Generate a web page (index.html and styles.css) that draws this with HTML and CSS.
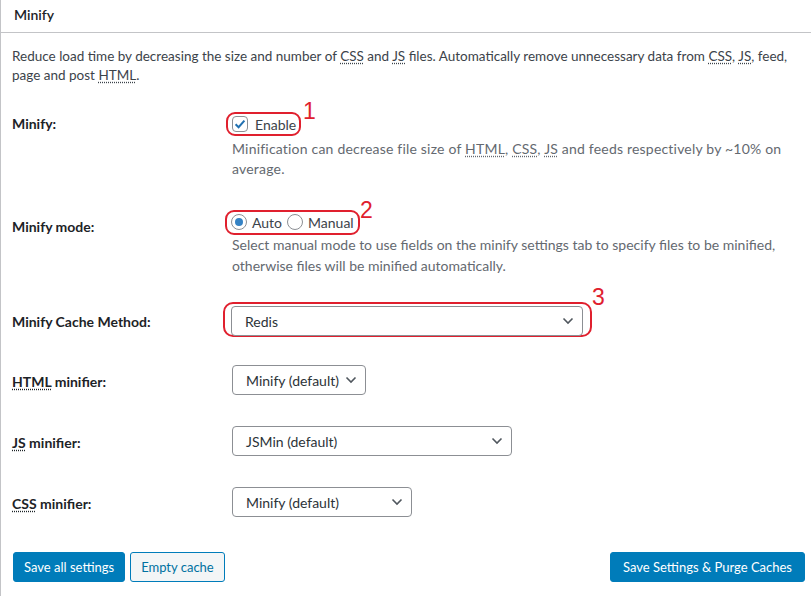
FILE: index.html
```html
<!DOCTYPE html>
<html>
<head>
<meta charset="utf-8">
<link rel="stylesheet" href="styles.css">
</head>
<body>
<div class="box">
  <h3 class="box-title">Minify</h3>
  <div class="inside">
    <p class="intro">Reduce load time by decreasing the size and number of <abbr>CSS</abbr> and <abbr>JS</abbr> files. Automatically remove unnecessary data from <abbr>CSS</abbr>, <abbr>JS</abbr>, feed, page and post <abbr>HTML</abbr>.</p>

    <div class="row row-1">
      <div class="label">Minify:</div>
      <div class="field">
        <div class="line">
          <span class="mark mark-1">
            <span class="checkbox"><svg viewBox="0 0 16 16" width="16" height="16"><path d="M3.6 8.2 L6.6 11.2 L12.4 4.6" fill="none" stroke="#2271b1" stroke-width="2"/></svg></span>
            <span class="opt">Enable</span>
            <span class="num num-1">1</span>
          </span>
        </div>
        <p class="desc">Minification can decrease file size of <abbr>HTML</abbr>, <abbr>CSS</abbr>, <abbr>JS</abbr> and feeds respectively by ~10% on average.</p>
      </div>
    </div>

    <div class="row row-2">
      <div class="label">Minify mode:</div>
      <div class="field">
        <div class="line">
          <span class="mark mark-2">
            <span class="radio checked"></span><span class="opt">Auto</span>
            <span class="radio"></span><span class="opt">Manual</span>
            <span class="num num-2">2</span>
          </span>
        </div>
        <p class="desc">Select manual mode to use fields on the minify settings tab to specify files to be minified, otherwise files will be minified automatically.</p>
      </div>
    </div>

    <div class="row row-3">
      <div class="label">Minify Cache Method:</div>
      <div class="field">
        <span class="mark mark-3">
          <span class="select sel-redis">Redis</span>
          <span class="num num-3">3</span>
        </span>
      </div>
    </div>

    <div class="row row-4">
      <div class="label"><abbr>HTML</abbr> minifier:</div>
      <div class="field"><span class="select sel-html">Minify (default)</span></div>
    </div>

    <div class="row row-5">
      <div class="label"><abbr>JS</abbr> minifier:</div>
      <div class="field"><span class="select sel-js">JSMin (default)</span></div>
    </div>

    <div class="row row-6">
      <div class="label"><abbr>CSS</abbr> minifier:</div>
      <div class="field"><span class="select sel-css">Minify (default)</span></div>
    </div>

    <div class="buttons">
      <span class="btn primary">Save all settings</span>
      <span class="btn secondary">Empty cache</span>
      <span class="spacer"></span>
      <span class="btn primary wide">Save Settings &amp; Purge Caches</span>
    </div>
  </div>
</div>
</body>
</html>
```
FILE: styles.css
```css
html, body {
  margin: 0;
  padding: 0;
  background: #fff;
}
body {
  font-family: "Segoe UI", Lato, "Liberation Sans", sans-serif;
  color: #3c434a;
  font-size: 13px;
  width: 811px;
  height: 596px;
  overflow: hidden;
}
.box {
  border-left: 1px solid #c3c4c7;
  min-height: 596px;
  box-sizing: border-box;
}
.box-title {
  margin: 0;
  height: 33px;
  box-sizing: border-box;
  border-bottom: 1px solid #c3c4c7;
  padding: 5px 0 0 13px;
  font-size: 14px;
  font-weight: 600;
  line-height: 19px;
  color: #1d2327;
}
.inside {
  padding: 0 6px 0 11px;
}
abbr {
  text-decoration: underline dotted;
  text-underline-offset: 2px;
}
.intro {
  margin: 14px 0 0;
  line-height: 19px;
  font-size: 13.5px;
}
.row {
  display: flex;
  align-items: flex-start;
}
.label {
  width: 220px;
  flex: none;
  font-size: 14px;
  font-weight: 700;
  color: #1d2327;
  line-height: 24px;
}
.field {
  flex: 1;
  font-size: 14px;
}
.line {
  height: 24px;
  display: flex;
  align-items: center;
}
.desc {
  margin: 3px 0 0;
  line-height: 20px;
  color: #646970;
  font-size: 14px;
  padding-right: 20px;
}
.row-1 { padding-top: 27px; }
.row-1 .desc { letter-spacing: 0.2px; }
.row-2 { padding-top: 31px; }
.row-2 .label { padding-top: 5px; }
.row-2 .desc { margin-top: 1px; line-height: 20.5px; }
.row-3 { padding-top: 30px; }
.row-3 .label { padding-top: 4px; }
.row-4 { padding-top: 28px; }
.row-4 .label { padding-top: 5px; }
.row-5 { padding-top: 31px; }
.row-5 .label { padding-top: 5px; }
.row-6 { padding-top: 31px; }
.row-6 .label { padding-top: 5px; }

.mark {
  position: relative;
  display: inline-flex;
  align-items: center;
  border: 2px solid #e0202e;
  border-radius: 9px;
  box-sizing: border-box;
}
.mark-1 {
  margin-left: -6px;
  height: 24px;
  padding: 0 3px 0 4px;
}
.mark-2 {
  margin-left: -7px;
  height: 25px;
  padding: 0 4px 0 4px;
}
.mark-3 {
  margin-left: -9px;
  padding: 2px 7px 0 7px;
  height: 35px;
  align-items: flex-start;
  border-radius: 10px;
  margin-top: -4px;
}
.num {
  position: absolute;
  color: #e0202e;
  font-family: "Liberation Sans", sans-serif;
  font-size: 23px;
  line-height: 23px;
}
.num-1 { left: 75px; top: -14px; }
.num-2 { left: 133px; top: -13px; }
.num-3 { left: 367px; top: -18px; }

.checkbox {
  width: 16px;
  height: 16px;
  box-sizing: border-box;
  border: 1px solid #8c8f94;
  border-radius: 4px;
  background: #fff;
  display: inline-block;
  flex: none;
}
.checkbox svg {
  display: block;
  margin: -1px;
}
.opt {
  color: #3c434a;
  margin-left: 7px;
}
.mark-2 .opt { margin-left: 5px; }
.radio {
  width: 16px;
  height: 16px;
  box-sizing: border-box;
  border: 1px solid #8c8f94;
  border-radius: 50%;
  display: inline-block;
  flex: none;
  position: relative;
}
.radio + .opt + .radio { margin-left: 5px; }
.radio.checked::after {
  content: "";
  position: absolute;
  left: 3px;
  top: 3px;
  width: 8px;
  height: 8px;
  border-radius: 50%;
  background: #3582c4;
}

.select {
  display: inline-flex;
  align-items: center;
  height: 30px;
  box-sizing: border-box;
  border: 1px solid #8c8f94;
  border-radius: 4px;
  padding: 0 24px 0 13px;
  color: #2c3338;
  font-size: 14px;
  background-color: #fff;
  background-image: url("data:image/svg+xml;utf8,<svg xmlns='http://www.w3.org/2000/svg' width='12' height='8' viewBox='0 0 12 8'><path d='M1.5 1.5 L6 6 L10.5 1.5' fill='none' stroke='%2350575e' stroke-width='1.6'/></svg>");
  background-repeat: no-repeat;
  background-position: right 8px center;
  background-size: 12px 8px;
}
.sel-redis { width: 352px; margin-left: -1px; }
.sel-html { width: 134px; }
.sel-js { width: 280px; }
.sel-css { width: 180px; }

.buttons {
  display: flex;
  padding-top: 35px;
  gap: 5px;
  margin-left: 1px;
}
.spacer { flex: 1; }
.btn {
  display: inline-flex;
  align-items: center;
  justify-content: center;
  height: 30px;
  box-sizing: border-box;
  padding: 0 10px;
  border-radius: 3px;
  font-size: 13px;
  border: 1px solid #007cba;
}
.btn.wide { padding: 0 12px; }
.btn.primary {
  background: #007cba;
  color: #fff;
}
.btn.secondary {
  background: #f3f5f6;
  color: #0071a1;
}
```
